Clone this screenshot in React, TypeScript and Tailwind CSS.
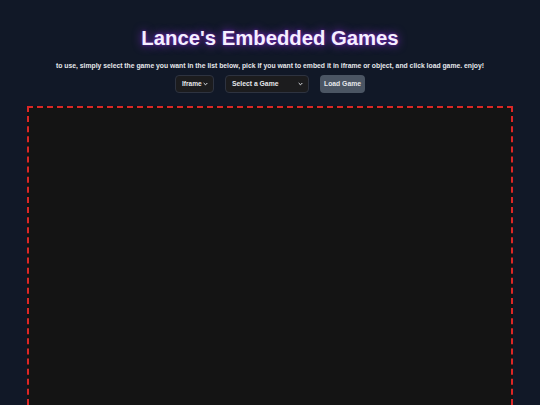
function Chevron() {
  return (
    <svg width="5" height="4" viewBox="0 0 6 4" fill="none" stroke="currentColor" strokeWidth="1.2">
      <path d="M0.8 0.8 L3 3 L5.2 0.8" />
    </svg>
  );
}

export default function App() {
  return (
    <div
      className="min-h-screen bg-[#111827] text-white flex flex-col items-center"
      style={{ fontFamily: '"Liberation Sans", Arial, sans-serif' }}
    >
      <h1 className="mt-[26px] text-[20.3px] leading-[24px] font-bold text-[#f5efff] [text-shadow:0_0_10px_rgba(147,51,234,0.85),0_0_3px_rgba(126,34,206,0.6)]">
        Lance's Embedded Games
      </h1>
      <p className="mt-[11px] text-[6.8px] leading-[9px] font-bold text-[#e5e7eb]">
        to use, simply select the game you want in the list below, pick if you want to embed it in iframe or object, and click load game. enjoy!
      </p>
      <div className="mt-[5px] flex items-center gap-[11px]">
        <div className="flex items-center justify-between w-[39px] h-[18px] pl-[6px] pr-[5px] rounded-[4px] bg-[#1c1c1e] border border-[#2e3340] text-[6.6px] font-bold text-[#e5e7eb]">
          <span>Iframe</span>
          <Chevron />
        </div>
        <div className="flex items-center justify-between w-[84px] h-[18px] pl-[6px] pr-[5px] rounded-[4px] bg-[#1c1c1e] border border-[#2e3340] text-[6.8px] font-bold text-[#e5e7eb]">
          <span>Select a Game</span>
          <Chevron />
        </div>
        <button className="h-[18px] w-[45px] rounded-[4px] bg-[#4b5563] text-[6.8px] font-bold text-[#e5e7eb]">
          Load Game
        </button>
      </div>
      <div className="mt-[13px] w-[90%] h-[400px] border-2 border-dashed border-[#dc2626] bg-[#141414]" />
    </div>
  );
}
